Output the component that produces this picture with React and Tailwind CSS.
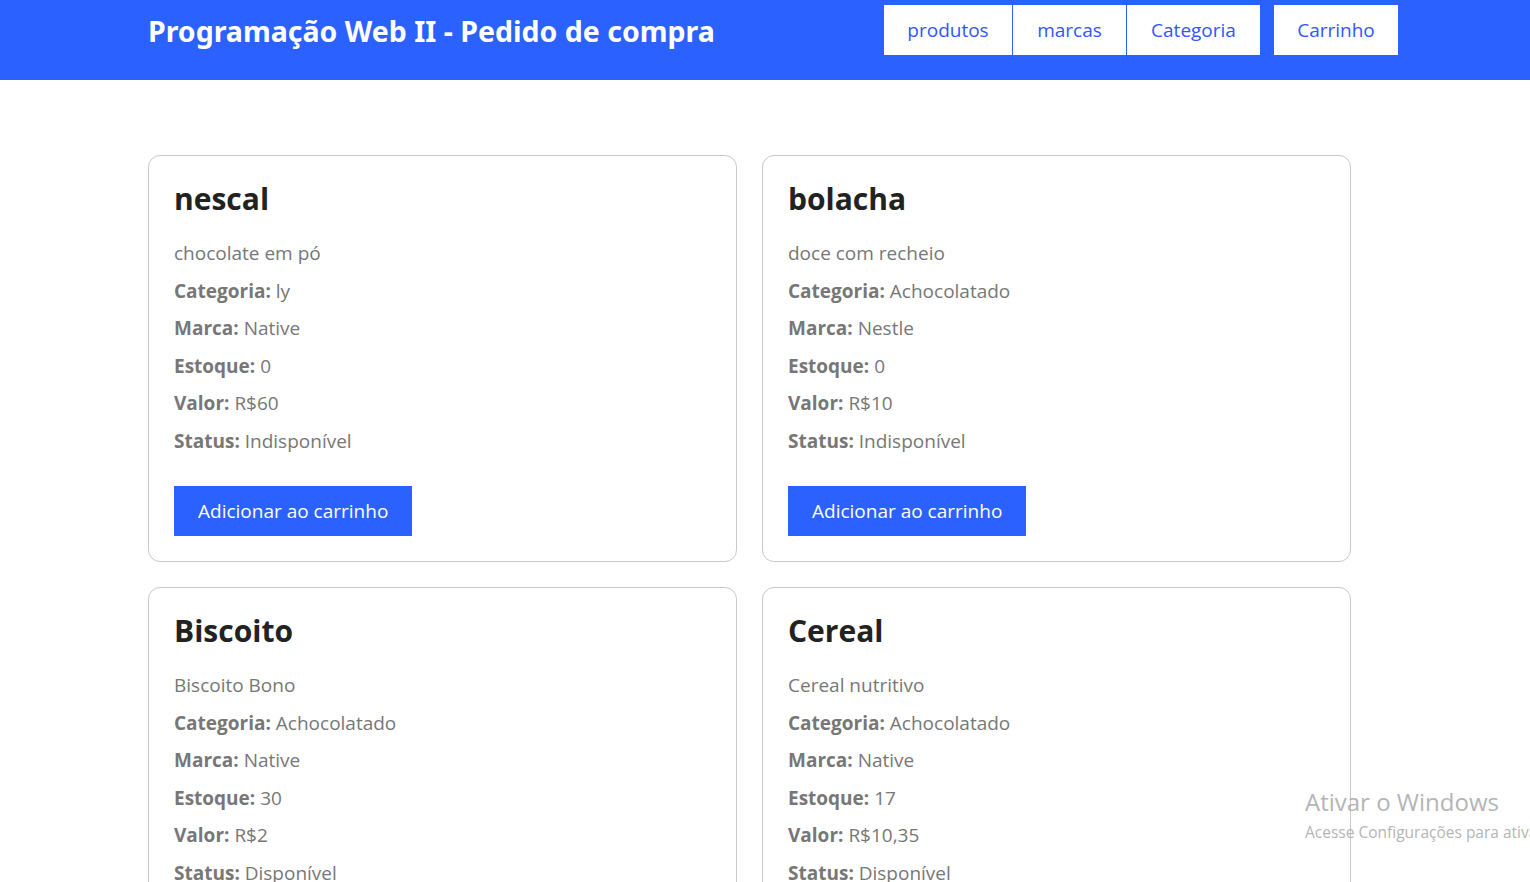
import React from 'react';

const produtos = [
  { nome: 'nescal', descricao: 'chocolate em pó', categoria: 'ly', marca: 'Native', estoque: 0, valor: 'R$60', status: 'Indisponível' },
  { nome: 'bolacha', descricao: 'doce com recheio', categoria: 'Achocolatado', marca: 'Nestle', estoque: 0, valor: 'R$10', status: 'Indisponível' },
  { nome: 'Biscoito', descricao: 'Biscoito Bono', categoria: 'Achocolatado', marca: 'Native', estoque: 30, valor: 'R$2', status: 'Disponível' },
  { nome: 'Cereal', descricao: 'Cereal nutritivo', categoria: 'Achocolatado', marca: 'Native', estoque: 17, valor: 'R$10,35', status: 'Disponível' },
];

function Linha({ label, value }) {
  return (
    <p className="leading-[37.5px]">
      <strong className="font-bold">{label}:</strong> {value}
    </p>
  );
}

function Card({ p }) {
  return (
    <div className="border border-[#c8c8c8] rounded-xl px-[25px] pt-[22px] pb-[25px]">
      <h2 className="text-[30px] font-bold text-[#222] leading-[42px] mb-[15px]">{p.nome}</h2>
      <div className="text-[19px] text-[#777]">
        <p className="leading-[37.5px]">{p.descricao}</p>
        <Linha label="Categoria" value={p.categoria} />
        <Linha label="Marca" value={p.marca} />
        <Linha label="Estoque" value={p.estoque} />
        <Linha label="Valor" value={p.valor} />
        <Linha label="Status" value={p.status} />
      </div>
      <button className="mt-[26px] h-[50px] px-[24px] bg-[#2b61ff] text-white text-[19px]">
        Adicionar ao carrinho
      </button>
    </div>
  );
}

export default function App() {
  return (
    <div className="min-h-screen bg-white font-['Open_Sans',sans-serif] overflow-hidden h-[882px] relative">
      <header className="h-[80px] bg-[#2b61ff] flex items-start">
        <h1 className="ml-[148px] mt-[10px] text-white text-[28.5px] font-bold font-['Noto_Sans',sans-serif]">
          Programação Web II - Pedido de compra
        </h1>
        <nav className="ml-auto mr-[132px] mt-[5px] flex gap-[14px]">
          <div className="flex gap-px">
            <a className="w-[128px] h-[50px] bg-white text-[#3355ff] text-[19px] flex items-center justify-center">produtos</a>
            <a className="w-[113px] h-[50px] bg-white text-[#3355ff] text-[19px] flex items-center justify-center">marcas</a>
            <a className="w-[133px] h-[50px] bg-white text-[#3355ff] text-[19px] flex items-center justify-center">Categoria</a>
          </div>
          <a className="w-[124px] h-[50px] bg-white text-[#3355ff] text-[19px] flex items-center justify-center">Carrinho</a>
        </nav>
      </header>

      <main className="ml-[148px] mt-[75px] w-[1203px] grid grid-cols-2 gap-[25px]">
        {produtos.map((p) => (
          <Card key={p.nome} p={p} />
        ))}
      </main>

      <div className="absolute left-[1305px] top-[787px] text-[#b5b5b5] whitespace-nowrap pointer-events-none">
        <p className="text-[24px] leading-[30px]">Ativar o Windows</p>
        <p className="text-[15.5px] leading-[30px]">Acesse Configurações para ativar o Windows.</p>
      </div>
    </div>
  );
}
